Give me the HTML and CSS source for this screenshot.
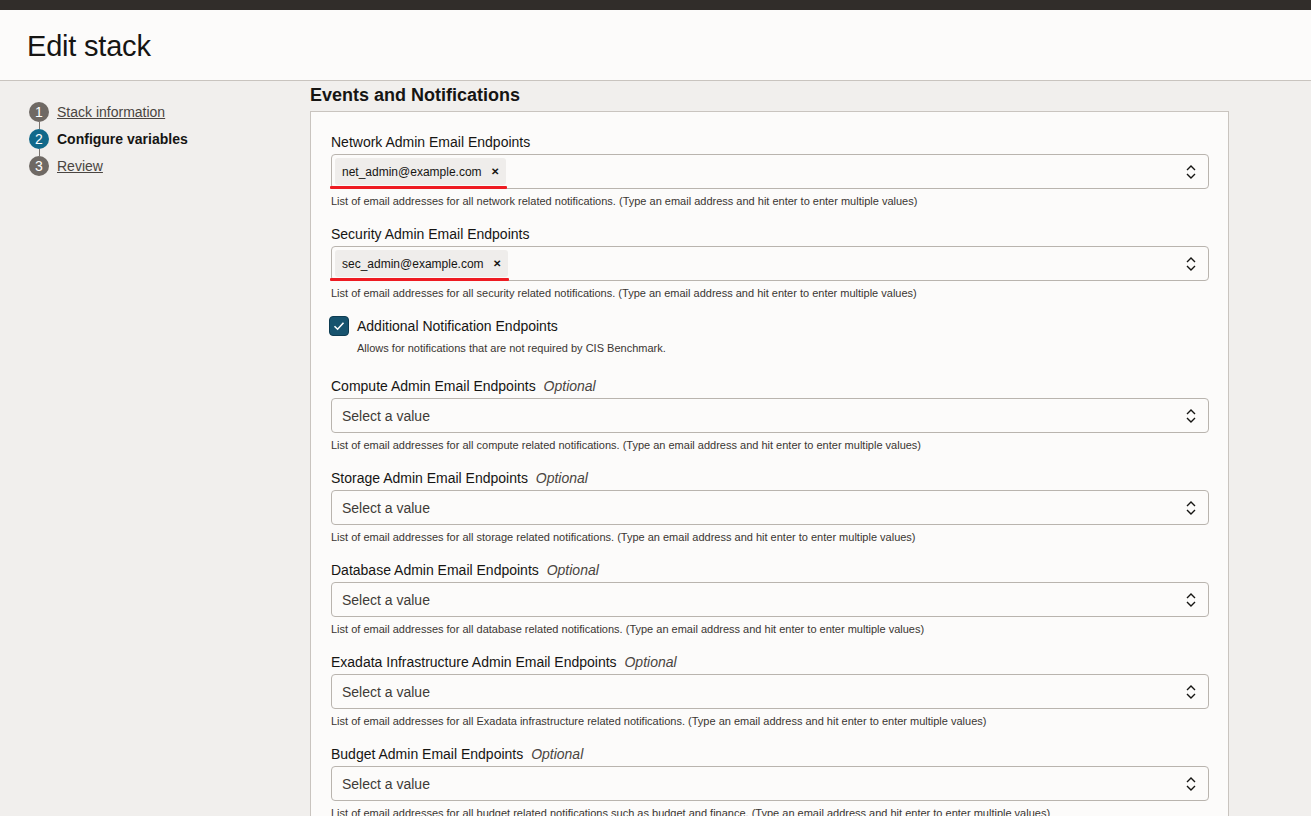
FILE: index.html
```html
<!DOCTYPE html>
<html>
<head>
<meta charset="utf-8">
<link rel="stylesheet" href="styles.css">
</head>
<body>
<div class="topbar"></div>
<header class="header"><h1 class="title">Edit stack</h1></header>
<div class="main">
  <nav class="steps">
    <div class="step"><span class="num">1</span><a class="step-link">Stack information</a></div>
    <div class="connector"></div>
    <div class="step"><span class="num active">2</span><span class="step-current">Configure variables</span></div>
    <div class="connector"></div>
    <div class="step"><span class="num">3</span><a class="step-link">Review</a></div>
  </nav>
  <section class="content">
    <h2 class="section-title">Events and Notifications</h2>
    <div class="panel">
      <div class="field">
        <div class="label">Network Admin Email Endpoints</div>
        <div class="input">
          <span class="chip">net_admin@example.com<span class="x">&#x2715;</span></span>
          <svg class="arrows" width="12" height="16" viewBox="0 0 12 16"><path d="M2 6 L6 2 L10 6 M2 10 L6 14 L10 10" fill="none" stroke="#161513" stroke-width="1.4"/></svg>
        </div>
        <div class="help">List of email addresses for all network related notifications. (Type an email address and hit enter to enter multiple values)</div>
      </div>
      <div class="field">
        <div class="label">Security Admin Email Endpoints</div>
        <div class="input">
          <span class="chip">sec_admin@example.com<span class="x">&#x2715;</span></span>
          <svg class="arrows" width="12" height="16" viewBox="0 0 12 16"><path d="M2 6 L6 2 L10 6 M2 10 L6 14 L10 10" fill="none" stroke="#161513" stroke-width="1.4"/></svg>
        </div>
        <div class="help">List of email addresses for all security related notifications. (Type an email address and hit enter to enter multiple values)</div>
      </div>
      <div class="check-field">
        <div class="check-row">
          <span class="checkbox"><svg width="14" height="14" viewBox="0 0 14 14"><path d="M2.5 7.2 L5.6 10.2 L11.5 3.8" fill="none" stroke="#fff" stroke-width="1.6"/></svg></span>
          <span class="check-label">Additional Notification Endpoints</span>
        </div>
        <div class="help check-help">Allows for notifications that are not required by CIS Benchmark.</div>
      </div>
      <div class="field">
        <div class="label">Compute Admin Email Endpoints <em>Optional</em></div>
        <div class="input"><span class="placeholder">Select a value</span>
          <svg class="arrows" width="12" height="16" viewBox="0 0 12 16"><path d="M2 6 L6 2 L10 6 M2 10 L6 14 L10 10" fill="none" stroke="#161513" stroke-width="1.4"/></svg></div>
        <div class="help">List of email addresses for all compute related notifications. (Type an email address and hit enter to enter multiple values)</div>
      </div>
      <div class="field">
        <div class="label">Storage Admin Email Endpoints <em>Optional</em></div>
        <div class="input"><span class="placeholder">Select a value</span>
          <svg class="arrows" width="12" height="16" viewBox="0 0 12 16"><path d="M2 6 L6 2 L10 6 M2 10 L6 14 L10 10" fill="none" stroke="#161513" stroke-width="1.4"/></svg></div>
        <div class="help">List of email addresses for all storage related notifications. (Type an email address and hit enter to enter multiple values)</div>
      </div>
      <div class="field">
        <div class="label">Database Admin Email Endpoints <em>Optional</em></div>
        <div class="input"><span class="placeholder">Select a value</span>
          <svg class="arrows" width="12" height="16" viewBox="0 0 12 16"><path d="M2 6 L6 2 L10 6 M2 10 L6 14 L10 10" fill="none" stroke="#161513" stroke-width="1.4"/></svg></div>
        <div class="help">List of email addresses for all database related notifications. (Type an email address and hit enter to enter multiple values)</div>
      </div>
      <div class="field">
        <div class="label">Exadata Infrastructure Admin Email Endpoints <em>Optional</em></div>
        <div class="input"><span class="placeholder">Select a value</span>
          <svg class="arrows" width="12" height="16" viewBox="0 0 12 16"><path d="M2 6 L6 2 L10 6 M2 10 L6 14 L10 10" fill="none" stroke="#161513" stroke-width="1.4"/></svg></div>
        <div class="help">List of email addresses for all Exadata infrastructure related notifications. (Type an email address and hit enter to enter multiple values)</div>
      </div>
      <div class="field">
        <div class="label">Budget Admin Email Endpoints <em>Optional</em></div>
        <div class="input"><span class="placeholder">Select a value</span>
          <svg class="arrows" width="12" height="16" viewBox="0 0 12 16"><path d="M2 6 L6 2 L10 6 M2 10 L6 14 L10 10" fill="none" stroke="#161513" stroke-width="1.4"/></svg></div>
        <div class="help">List of email addresses for all budget related notifications such as budget and finance. (Type an email address and hit enter to enter multiple values)</div>
      </div>
    </div>
  </section>
</div>
</body>
</html>
```

FILE: styles.css
```css
* { box-sizing: border-box; }
html, body { margin: 0; padding: 0; }
body {
  font-family: "Liberation Sans", Arial, sans-serif;
  color: #161513;
  background: #f1efed;
  height: 816px;
  overflow: hidden;
}
.topbar { height: 10px; background: #312d2a; }
.header {
  height: 71px;
  background: #fcfbfa;
  border-bottom: 1px solid #c9c4bf;
  padding: 0 27px;
}
.title {
  margin: 0;
  padding-top: 20px;
  font-size: 29px;
  font-weight: normal;
  line-height: 32px;
  letter-spacing: -0.2px;
}
.main { display: flex; }
.steps {
  width: 310px;
  padding: 21px 0 0 29px;
  display: flex;
  flex-direction: column;
}
.step { display: flex; align-items: center; height: 20px; }
.connector { width: 1px; height: 7px; background: #7a736e; margin-left: 10px; }
.num {
  width: 20px; height: 20px; border-radius: 50%;
  background: #6f6964; color: #fff;
  font-size: 14px; line-height: 20px; text-align: center;
  margin-right: 8px;
  flex: none;
}
.num.active { background: #12698a; }
.step-link { font-size: 14px; color: #4a4541; text-decoration: underline; }
.step-current { font-size: 14px; font-weight: bold; }
.content { width: 919px; }
.section-title {
  margin: 0;
  font-size: 18px;
  font-weight: bold;
  line-height: 28px;
  height: 30px;
}
.panel {
  border: 1px solid #c9c4bf;
  border-bottom: none;
  background: #fcfbfa;
  padding: 20px 19px 0 20px;
  height: 800px;
}
.field { margin-bottom: 16px; }
.label { font-size: 14px; line-height: 20px; margin-bottom: 2px; }
.label em { font-style: italic; color: #4a4541; margin-left: 4px; font-size: 14px; }
.input {
  height: 35px;
  border: 1px solid #b9b4ae;
  border-radius: 4px;
  background: #fcfbfa;
  display: flex;
  align-items: center;
  padding: 0 11px 0 3px;
  position: relative;
}
.arrows { margin-left: auto; flex: none; }
.placeholder { font-size: 14px; color: #3f3b37; padding-left: 7px; }
.chip {
  height: 27px;
  background: #efedeb;
  border-radius: 3px;
  font-size: 12px;
  display: flex;
  align-items: center;
  padding: 0 7px 0 7px;
  position: relative;
  color: #161513;
}
.chip::after {
  content: "";
  position: absolute;
  left: -5px; right: -1px; bottom: -4px;
  height: 3px;
  background: #ee1b22;
  border-radius: 1px;
}
.x { font-size: 10px; font-weight: bold; margin-left: 9px; }
.help { font-size: 11px; line-height: 14px; margin-top: 5px; color: #3a3632; }
.check-field { margin-bottom: 21px; }
.check-row { display: flex; align-items: center; height: 20px; }
.checkbox {
  width: 20px; height: 20px;
  border-radius: 4px;
  background: #17536e;
  border: 1.5px solid #0e3c52;
  display: flex; align-items: center; justify-content: center;
  margin-left: -2px;
  margin-right: 8px;
}
.check-label { font-size: 14px; }
.check-help { margin-top: 5px; padding-left: 26px; }
```
